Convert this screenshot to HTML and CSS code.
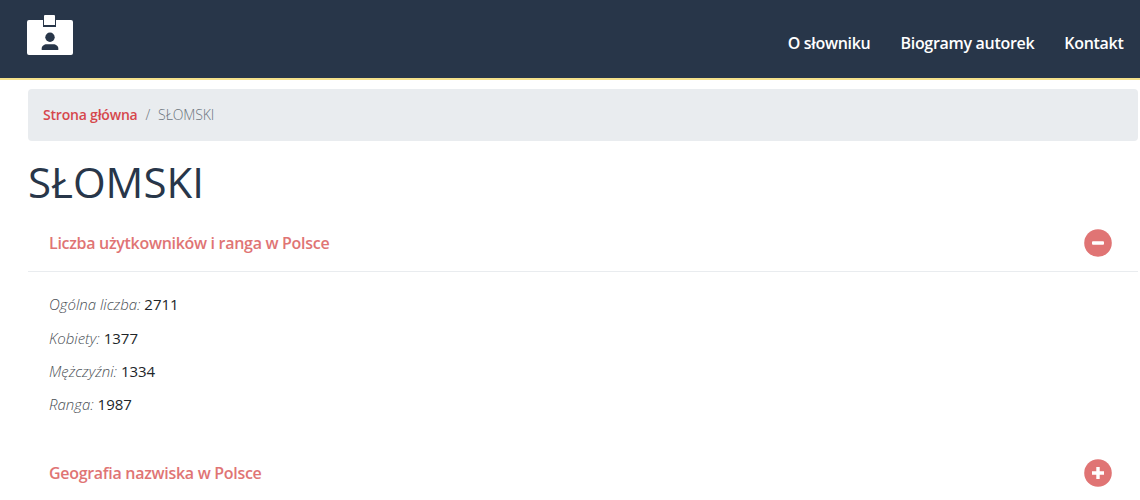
FILE: index.html
```html
<!DOCTYPE html>
<html lang="pl">
<head>
<meta charset="utf-8">
<title>SŁOMSKI</title>
<link rel="stylesheet" href="styles.css">
</head>
<body>
<header class="navbar">
  <a class="brand" href="#" aria-label="Strona główna">
    <svg class="logo" width="46" height="41" viewBox="0 0 46 41">
      <path fill="#fff" d="M2 5H16V12H29V5H44a2 2 0 0 1 2 2V38a2 2 0 0 1-2 2H2a2 2 0 0 1-2-2V7a2 2 0 0 1 2-2Z"/>
      <path fill="#fff" d="M17 1a1 1 0 0 1 1-1H27a1 1 0 0 1 1 1V10H17Z"/>
      <circle cx="23" cy="22.300" r="4.700" fill="#283649"/>
      <path fill="#283649" d="M14.700 35v-1.500c0-2.600 2.500-4.200 5-4.200h6.600c2.500 0 5 1.600 5 4.200V35Z"/>
    </svg>
  </a>
  <nav class="nav">
    <a href="#">O słowniku</a>
    <a href="#">Biogramy autorek</a>
    <a href="#">Kontakt</a>
  </nav>
</header>
<main class="content">
  <ol class="breadcrumb">
    <li><a href="#">Strona główna</a></li>
    <li class="sep">/</li>
    <li class="current">SŁOMSKI</li>
  </ol>
  <h1 class="title">SŁOMSKI</h1>
  <section class="panel">
    <div class="panel-head panel-head-open">
      <span>Liczba użytkowników i ranga w Polsce</span>
      <svg class="toggle" width="28" height="28" viewBox="0 0 28 28"><circle cx="14" cy="14" r="13.800" fill="#e07474"/><rect x="8" y="12.300" width="12" height="3.400" rx="1" fill="#fff"/></svg>
    </div>
    <div class="panel-body">
      <p class="first"><em>Ogólna liczba:</em> 2711</p>
      <p><em>Kobiety:</em> 1377</p>
      <p><em>Mężczyźni:</em> 1334</p>
      <p><em>Ranga:</em> 1987</p>
    </div>
  </section>
  <section class="panel">
    <div class="panel-head">
      <span>Geografia nazwiska w Polsce</span>
      <svg class="toggle" width="28" height="28" viewBox="0 0 28 28"><circle cx="14" cy="14" r="13.800" fill="#e07474"/><path fill="#fff" d="M12.300 8h3.400v4.300H20v3.400h-4.300V20h-3.400v-4.300H8v-3.400h4.300Z"/></svg>
    </div>
  </section>
</main>
</body>
</html>
```
FILE: styles.css
```css
* { box-sizing: border-box; }
html, body { height: 100%; overflow: hidden; }
body {
  margin: 0;
  background: #fff;
  color: #283649;
  font-family: "Open Sans", sans-serif;
  font-size: 15px;
}
a { text-decoration: none; }
.navbar {
  height: 80px;
  background: #283649;
  border-bottom: 2px solid #f5e28c;
  display: flex;
  justify-content: space-between;
  padding: 15px 16.500px 0 27px;
}
.brand { display: block; height: 41px; }
.logo { display: block; }
.nav { display: flex; gap: 30px; padding-top: 18px; }
.nav a {
  color: #fff;
  font-size: 16px;
  font-weight: 600;
  letter-spacing: -0.3px;
  line-height: 20px;
}
.content { padding: 9px 2px 0 28px; }
.breadcrumb {
  list-style: none;
  margin: 0;
  height: 52px;
  padding: 0 15px 2px;
  display: flex;
  align-items: center;
  gap: 8px;
  background: #e9ecef;
  border-radius: 4px;
  font-size: 14px;
  letter-spacing: -0.2px;
}
.breadcrumb a { color: #d6474c; font-weight: 600; }
.sep, .current { color: #6c757d; font-weight: 300; }
.current { letter-spacing: -0.1px; }
.title {
  margin: 17px 0 0;
  height: 49px;
  font-size: 42px;
  line-height: 48px;
  font-weight: 400;
  color: #283649;
}
.panel-head {
  display: flex;
  justify-content: space-between;
  align-items: center;
  height: 62px;
  padding: 0 26px 0 21px;
  color: #e07474;
  font-size: 16px;
  font-weight: 600;
  letter-spacing: -0.3px;
}
.panel-head-open { border-bottom: 1px solid #e9ecef; height: 65px; padding-top: 7px; }
.panel-body { padding: 22px 21px 23px; height: 170px; }
.panel-body p {
  margin: 0 0 13px;
  height: 20px;
  font-size: 15px;
  line-height: 20px;
  color: #212529;
}
.panel-body .first { margin-bottom: 14px; }
.panel-body em { font-weight: 300; color: #4a4f55; }
.toggle { display: block; }
```
